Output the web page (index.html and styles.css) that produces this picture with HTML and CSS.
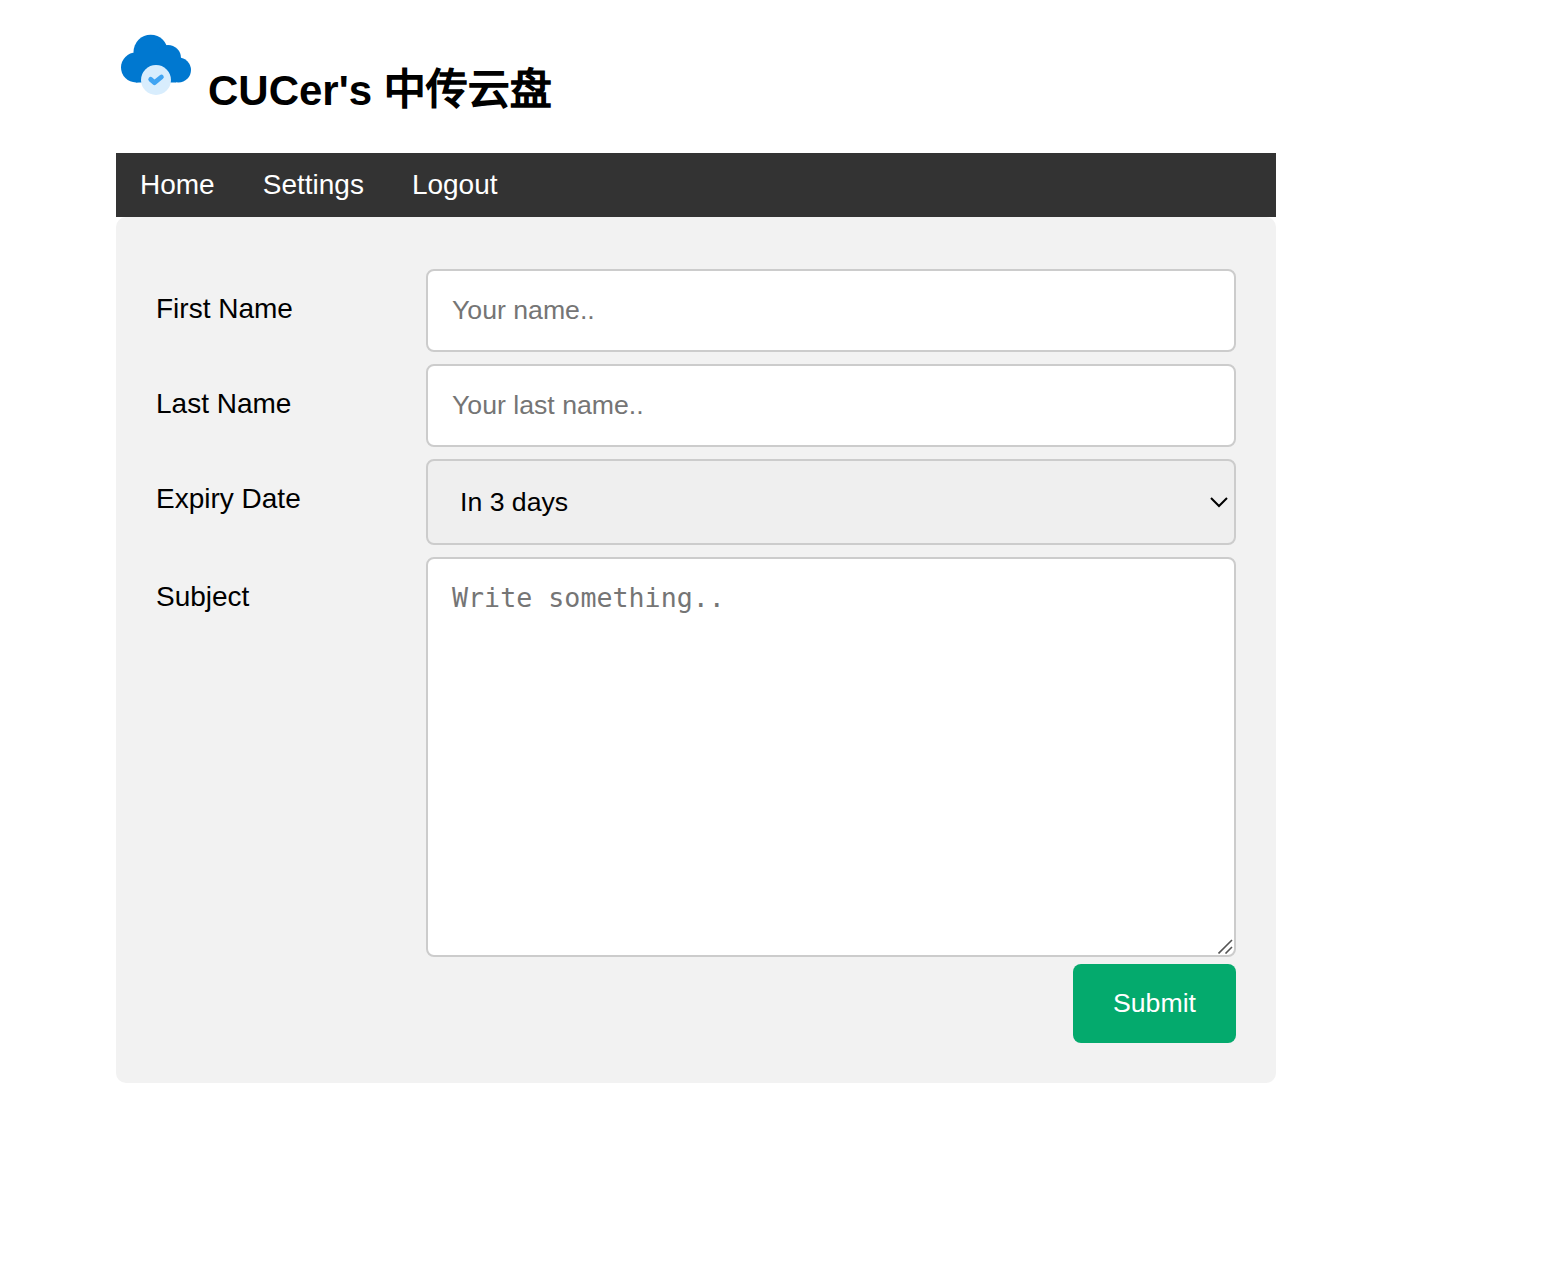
FILE: index.html
```html
<!DOCTYPE html>
<html lang="zh">
<head>
<meta charset="utf-8">
<title>CUCer's 中传云盘</title>
<link rel="stylesheet" href="styles.css">
</head>
<body>
<div class="page">
  <header class="brand">
    <svg class="logo" viewBox="0 0 80 80" aria-hidden="true">
      <g fill="#0078d0">
        <circle cx="20" cy="42.500" r="15"/>
        <circle cx="34.700" cy="27" r="17.200"/>
        <circle cx="52" cy="33" r="13"/>
        <circle cx="62.500" cy="45" r="12.500"/>
        <path d="M20 30H60V57.500H20Z"/>
      </g>
      <circle cx="40" cy="55" r="15" fill="#d8edfd"/>
      <path d="M34.700 54.400L38.500 57.700L45.400 52" fill="none" stroke="#40a4f2" stroke-width="4.800" stroke-linecap="round" stroke-linejoin="round"/>
    </svg>
    <h1>CUCer's <span class="zh">中传云盘</span></h1>
  </header>
  <nav class="nav"><a>Home</a><a>Settings</a><a>Logout</a></nav>
  <form class="panel">
    <div class="row"><label for="fname">First Name</label><input id="fname" type="text" placeholder="Your name.."></div>
    <div class="row"><label for="lname">Last Name</label><input id="lname" type="text" placeholder="Your last name.."></div>
    <div class="row"><label for="expiry">Expiry Date</label>
      <div class="field">
        <select id="expiry"><option>In 3 days</option></select>
        <svg class="chevron" viewBox="0 0 18 11" aria-hidden="true"><path d="M1 1L9 9L17 1" fill="none" stroke="#000" stroke-width="2"/></svg>
      </div>
    </div>
    <div class="row"><label for="subject">Subject</label>
      <div class="field">
        <textarea id="subject" placeholder="Write something.."></textarea>
        <svg class="grip" viewBox="0 0 15 15" aria-hidden="true"><path d="M.5 14.500L14 1M7.500 14.500L14 8" fill="none" stroke="#555" stroke-width="1.600"/></svg>
      </div>
    </div>
    <button class="submit" type="button">Submit</button>
  </form>
</div>
</body>
</html>
```
FILE: styles.css
```css
* { box-sizing: border-box; }
body { margin: 0; background: #fff; color: #000; font: 28px "Liberation Sans", "Noto Sans CJK SC", sans-serif; }
.page { width: 1160px; margin-left: 116px; }
.brand { height: 153px; display: flex; gap: 12px; padding-top: 25px; }
.logo { width: 80px; height: 80px; }
h1 { margin: 35px 0 0; font-size: 42px; line-height: 62px; white-space: nowrap; }
.zh { font-family: "Noto Sans CJK SC", sans-serif; font-weight: 400; line-height: 1; -webkit-text-stroke: 1.7px #000; vertical-align: 1px; }
.nav { height: 64px; display: flex; background: #333; color: #fff; }
.nav a { padding: 16px 24px; line-height: 32px; }
.panel { height: 866px; padding: 52px 40px 40px; display: flex; flex-direction: column; background: #f2f2f2; border-radius: 10px; }
.row { display: grid; grid-template-columns: 270px 810px; margin-bottom: 12px; align-items: start; }
.row label { padding-top: 24px; line-height: 32px; }
.field { position: relative; display: flex; }
input, select, textarea { width: 100%; margin: 0; padding: 24px; border: 2px solid #ccc; border-radius: 8px; font: 26.667px "Liberation Sans", sans-serif; color: #000; }
input { height: 83px; background: #fff; }
select { height: 86px; padding-left: 32px; background: #efefef; appearance: none; }
textarea { height: 400px; padding-top: 23px; resize: none; font-family: "DejaVu Sans Mono", monospace; }
.chevron { position: absolute; right: 8px; top: 38px; width: 18px; height: 11px; pointer-events: none; }
.grip { position: absolute; right: 3px; bottom: 3px; width: 15px; height: 15px; pointer-events: none; }
.row:nth-of-type(4) { margin-bottom: 7px; }
.submit { align-self: flex-end; width: 163px; height: 79px; border: 0; border-radius: 8px; background: #04aa6d; color: #fff; font: 26.667px "Liberation Sans", sans-serif; }
```
